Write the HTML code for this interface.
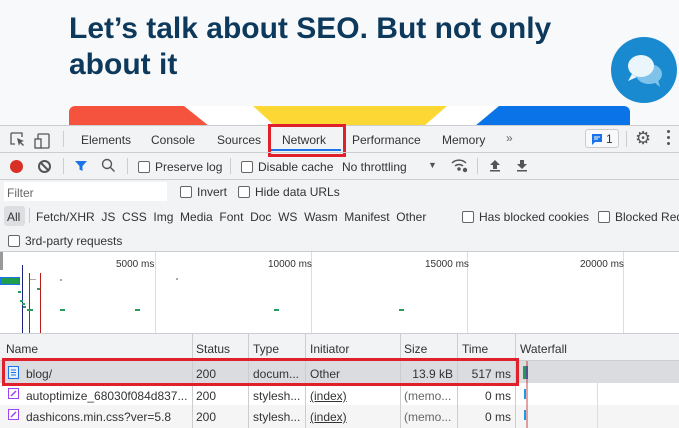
<!DOCTYPE html>
<html><head><meta charset="utf-8"><style>
*{margin:0;padding:0;box-sizing:border-box}
body{width:679px;height:428px;overflow:hidden;background:#f8f9fa;font-family:"Liberation Sans",sans-serif;font-size:12px;color:#333;position:relative}
.a{position:absolute;white-space:nowrap}
h1{position:absolute;left:69px;top:11px;font-size:30px;line-height:36px;color:#0d3a5c;font-weight:bold;letter-spacing:0}
.cb{display:inline-block;width:12px;height:12px;border:1px solid #666;border-radius:2px;background:#fff;vertical-align:-2px;margin-right:5px}
.line{position:absolute;background:#cbcdd1}
.gl{position:absolute;top:252px;height:82px;width:1px;background:#ddd}
.vc{position:absolute;top:334px;height:94px;width:1px;background:#cbcdd1}
</style></head><body>
<h1>Let’s talk about SEO. But not only<br>about it</h1>
<svg class="a" style="left:69px;top:106px" width="561" height="20">
<defs><clipPath id="c"><path d="M6 0H555a6 6 0 0 1 6 6V20H0V6a6 6 0 0 1 6-6z"/></clipPath></defs>
<g clip-path="url(#c)">
<rect width="561" height="20" fill="#fff"/>
<polygon points="0,0 115,0 140,20 0,20" fill="#f5533d"/>
<polygon points="184,0 378,0 355,20 206,20" fill="#fdd835"/>
<polygon points="430,0 561,0 561,20 406,20" fill="#0a73e8"/>
</g></svg>
<div class="a" style="left:611px;top:37px;width:66px;height:66px;border-radius:50%;background:#1a8ad0"></div>
<svg class="a" style="left:624px;top:52px" width="42" height="36"><ellipse cx="25" cy="22" rx="13" ry="10" fill="#7fc3ea"/><path d="M30 30l6 5-2-7z" fill="#7fc3ea"/><ellipse cx="17" cy="14" rx="13" ry="11" fill="#eaf5fc"/><path d="M8 22l-4 7 9-4z" fill="#eaf5fc"/></svg>

<div class="a" style="left:0;top:125px;width:679px;height:303px;background:#f1f3f4"></div>
<div class="line" style="left:0;top:125px;width:679px;height:1px"></div>
<svg class="a" style="left:9px;top:131px" width="44" height="18" fill="none" stroke="#555" stroke-width="1.3"><path d="M2 2h11v4M2 2v11h4"/><path d="M8 7l7 3-3 1 3 3-1 1-3-3-1 3z" fill="#555" stroke="none"/><rect x="29" y="3" width="11" height="14" rx="1"/><rect x="26" y="8" width="6" height="9" fill="#f1f3f4"/></svg>
<div class="line" style="left:63px;top:131px;width:1px;height:16px"></div>
<div class="a" style="left:81px;top:133px">Elements</div>
<div class="a" style="left:151px;top:133px">Console</div>
<div class="a" style="left:217px;top:133px">Sources</div>
<div class="a" style="left:282px;top:133px">Network</div>
<div class="a" style="left:271px;top:149px;width:70px;height:2px;background:#1a73e8"></div>
<div class="a" style="left:268px;top:124px;width:78px;height:33px;border:3px solid #e0202b"></div>
<div class="a" style="left:352px;top:133px">Performance</div>
<div class="a" style="left:442px;top:133px">Memory</div>
<div class="a" style="left:506px;top:131px;color:#666">»</div>
<div class="a" style="left:585px;top:129px;width:34px;height:19px;border:1px solid #ccc;border-radius:3px;background:#f8f9fa"></div>
<svg class="a" style="left:591px;top:133px" width="12" height="12"><path d="M1 1h10v8H4l-3 3z" fill="#1a73e8"/><path d="M3 4h6M3 6h4" stroke="#fff"/></svg>
<div class="a" style="left:606px;top:132px">1</div>
<div class="line" style="left:626px;top:131px;width:1px;height:16px"></div>
<div class="a" style="left:635px;top:128px;font-size:18px;color:#555">⚙</div>
<div class="a" style="left:667px;top:130px;width:3px;height:3px;background:#555;border-radius:50%;box-shadow:0 6px #555,0 12px #555"></div>
<div class="line" style="left:0;top:152px;width:679px;height:1px"></div>
<div class="a" style="left:10px;top:160px;width:13px;height:13px;border-radius:50%;background:#d93025"></div>
<svg class="a" style="left:37px;top:159px" width="15" height="15"><circle cx="7.5" cy="7.5" r="5.5" fill="none" stroke="#555" stroke-width="2"/><path d="M4 4l7 7" stroke="#555" stroke-width="2"/></svg>
<div class="line" style="left:63px;top:158px;width:1px;height:16px"></div>
<svg class="a" style="left:74px;top:159px" width="14" height="14"><path d="M1 2h12l-4.5 5v5l-3-1.5V7z" fill="#1a73e8"/></svg>
<svg class="a" style="left:101px;top:158px" width="15" height="15" fill="none" stroke="#555" stroke-width="1.4"><circle cx="6" cy="6" r="4.5"/><path d="M9.5 9.5l4 4"/></svg>
<div class="line" style="left:127px;top:158px;width:1px;height:16px"></div>
<div class="a" style="left:138px;top:160px"><span class="cb"></span>Preserve log</div>
<div class="line" style="left:230px;top:158px;width:1px;height:16px"></div>
<div class="a" style="left:241px;top:160px"><span class="cb"></span>Disable cache</div>
<div class="a" style="left:342px;top:160px">No throttling</div>
<div class="a" style="left:428px;top:160px;font-size:9px;color:#555">▼</div>
<svg class="a" style="left:451px;top:158px" width="18" height="15" fill="none" stroke="#555" stroke-width="1.5"><path d="M1 5a10 10 0 0 1 14 0M4 8a6 6 0 0 1 8 0"/><circle cx="8" cy="11" r="1" fill="#555"/><circle cx="14" cy="12" r="2.2" fill="#555" stroke="none"/></svg>
<div class="line" style="left:477px;top:158px;width:1px;height:16px"></div>
<svg class="a" style="left:488px;top:158px" width="50" height="15" fill="#555"><path d="M7 2l-5 5h3v4h4V7h3z"/><rect x="2" y="12" width="10" height="1.5"/><path d="M34 11l-5-5h3V2h4v4h3z"/><rect x="29" y="12" width="10" height="1.5"/></svg>
<div class="line" style="left:0;top:179px;width:679px;height:1px"></div>
<div class="a" style="left:4px;top:182px;width:163px;height:19px;background:#fff"></div>
<div class="a" style="left:7px;top:186px;color:#666">Filter</div>
<div class="a" style="left:180px;top:185px"><span class="cb"></span>Invert</div>
<div class="a" style="left:238px;top:185px"><span class="cb"></span>Hide data URLs</div>
<div class="a" style="left:4px;top:206px;width:21px;height:20px;background:#dcdee1;border-radius:3px"></div>
<div class="a" style="left:7px;top:210px">All</div>
<div class="line" style="left:29px;top:208px;width:1px;height:15px"></div>
<div class="a" style="left:36px;top:210px">Fetch/XHR&nbsp;&nbsp;JS&nbsp;&nbsp;CSS&nbsp;&nbsp;Img&nbsp;&nbsp;Media&nbsp;&nbsp;Font&nbsp;&nbsp;Doc&nbsp;&nbsp;WS&nbsp;&nbsp;Wasm&nbsp;&nbsp;Manifest&nbsp;&nbsp;Other</div>
<div class="a" style="left:462px;top:210px"><span class="cb"></span>Has blocked cookies</div>
<div class="a" style="left:598px;top:210px"><span class="cb"></span>Blocked Req</div>
<div class="a" style="left:8px;top:234px"><span class="cb"></span>3rd-party requests</div>
<div class="line" style="left:0;top:251px;width:679px;height:1px"></div>
<div class="a" style="left:0;top:252px;width:679px;height:82px;background:#fff"></div>
<div class="gl" style="left:155px"></div><div class="gl" style="left:311px"></div><div class="gl" style="left:467px"></div><div class="gl" style="left:623px"></div>
<div class="a" style="left:0;top:252px;width:3px;height:18px;background:#999"></div>
<div class="a" style="left:116px;top:259px;font-size:10px">5000 ms</div>
<div class="a" style="left:268px;top:259px;font-size:10px">10000 ms</div>
<div class="a" style="left:425px;top:259px;font-size:10px">15000 ms</div>
<div class="a" style="left:580px;top:259px;font-size:10px">20000 ms</div>
<div class="a" style="left:0;top:277px;width:20px;height:8px;background:#1e9e4e;border:1px solid #1a73e8"></div>
<div class="a" style="left:22px;top:265px;width:1px;height:68px;background:#1a237e"></div>
<div class="a" style="left:29px;top:273px;width:1px;height:60px;background:#b71c1c"></div>
<div class="a" style="left:40px;top:273px;width:1px;height:60px;background:#b71c1c"></div>
<div class="a" style="left:18px;top:291px;width:3px;height:2px;background:#2a9d5c;box-shadow:2px 9px #2a9d5c,4px 12px #2a9d5c,5px 15px #2a9d5c"></div>
<div class="a" style="left:37px;top:288px;width:3px;height:2px;background:#2a9d5c"></div>
<div class="a" style="left:27px;top:309px;width:6px;height:2px;background:#2a9d5c"></div>
<div class="a" style="left:60px;top:309px;width:5px;height:2px;background:#2a9d5c"></div>
<div class="a" style="left:135px;top:309px;width:5px;height:2px;background:#2a9d5c"></div>
<div class="a" style="left:274px;top:309px;width:5px;height:2px;background:#2a9d5c"></div>
<div class="a" style="left:399px;top:309px;width:5px;height:2px;background:#2a9d5c"></div>
<div class="a" style="left:30px;top:279px;width:6px;height:1px;background:#aaa"></div>
<div class="a" style="left:60px;top:279px;width:2px;height:2px;background:#aaa"></div>
<div class="a" style="left:176px;top:278px;width:2px;height:2px;background:#aaa"></div>
<div class="line" style="left:0;top:333px;width:679px;height:1px"></div>
<div class="a" style="left:0;top:334px;width:679px;height:27px;background:#f1f3f4"></div>
<div class="a" style="left:0;top:361px;width:679px;height:22px;background:#dadce0"></div>
<div class="a" style="left:0;top:383px;width:679px;height:22px;background:#fff"></div>
<div class="a" style="left:0;top:405px;width:679px;height:23px;background:#f5f5f5"></div>
<div class="vc" style="left:192px"></div><div class="vc" style="left:248px"></div><div class="vc" style="left:305px"></div><div class="vc" style="left:400px"></div><div class="vc" style="left:457px"></div><div class="vc" style="left:515px"></div><div class="a" style="left:597px;top:361px;width:1px;height:67px;background:#ddd"></div>
<div class="line" style="left:0;top:360px;width:679px;height:1px"></div>
<div class="a" style="left:6px;top:342px">Name</div>
<div class="a" style="left:196px;top:342px">Status</div>
<div class="a" style="left:253px;top:342px">Type</div>
<div class="a" style="left:310px;top:342px">Initiator</div>
<div class="a" style="left:404px;top:342px">Size</div>
<div class="a" style="left:462px;top:342px">Time</div>
<div class="a" style="left:520px;top:342px">Waterfall</div>
<svg class="a" style="left:8px;top:366px" width="12" height="14"><rect x="0.5" y="0.5" width="10" height="12" fill="#e8f0fe" stroke="#1a73e8"/><path d="M3 4h5M3 6.5h5M3 9h5" stroke="#1a73e8"/></svg>
<svg class="a" style="left:8px;top:388px" width="12" height="12"><rect x="0.5" y="0.5" width="10" height="10" fill="#fff" stroke="#a142f4"/><path d="M3 8l5-5" stroke="#a142f4" stroke-width="1.5"/></svg>
<svg class="a" style="left:8px;top:409px" width="12" height="12"><rect x="0.5" y="0.5" width="10" height="10" fill="#fff" stroke="#a142f4"/><path d="M3 8l5-5" stroke="#a142f4" stroke-width="1.5"/></svg>
<div class="a" style="left:26px;top:367px">blog/</div>
<div class="a" style="left:26px;top:389px">autoptimize_68030f084d837...</div>
<div class="a" style="left:26px;top:410px">dashicons.min.css?ver=5.8</div>
<div class="a" style="left:196px;top:367px">200</div><div class="a" style="left:196px;top:389px">200</div><div class="a" style="left:196px;top:410px">200</div>
<div class="a" style="left:253px;top:367px">docum...</div><div class="a" style="left:253px;top:389px">stylesh...</div><div class="a" style="left:253px;top:410px">stylesh...</div>
<div class="a" style="left:310px;top:367px">Other</div><div class="a" style="left:310px;top:389px;text-decoration:underline">(index)</div><div class="a" style="left:310px;top:410px;text-decoration:underline">(index)</div>
<div class="a" style="left:404px;top:367px;width:49px;text-align:right">13.9 kB</div><div class="a" style="left:404px;top:389px;color:#666">(memo...</div><div class="a" style="left:404px;top:410px;color:#666">(memo...</div>
<div class="a" style="left:460px;top:367px;width:51px;text-align:right">517 ms</div><div class="a" style="left:460px;top:389px;width:51px;text-align:right">0 ms</div><div class="a" style="left:460px;top:410px;width:51px;text-align:right">0 ms</div>
<div class="a" style="left:523px;top:366px;width:3px;height:13px;background:#1e9e4e"></div>
<div class="a" style="left:526px;top:366px;width:2px;height:13px;background:#1a73e8"></div>
<div class="a" style="left:524px;top:389px;width:2px;height:10px;background:#1a9be8"></div>
<div class="a" style="left:524px;top:410px;width:2px;height:10px;background:#1a9be8"></div>
<div class="a" style="left:526px;top:361px;width:2px;height:67px;background:rgba(183,28,28,.4)"></div>
<div class="a" style="left:2px;top:358px;width:517px;height:28px;border:3px solid #e0202b"></div>
</body></html>
